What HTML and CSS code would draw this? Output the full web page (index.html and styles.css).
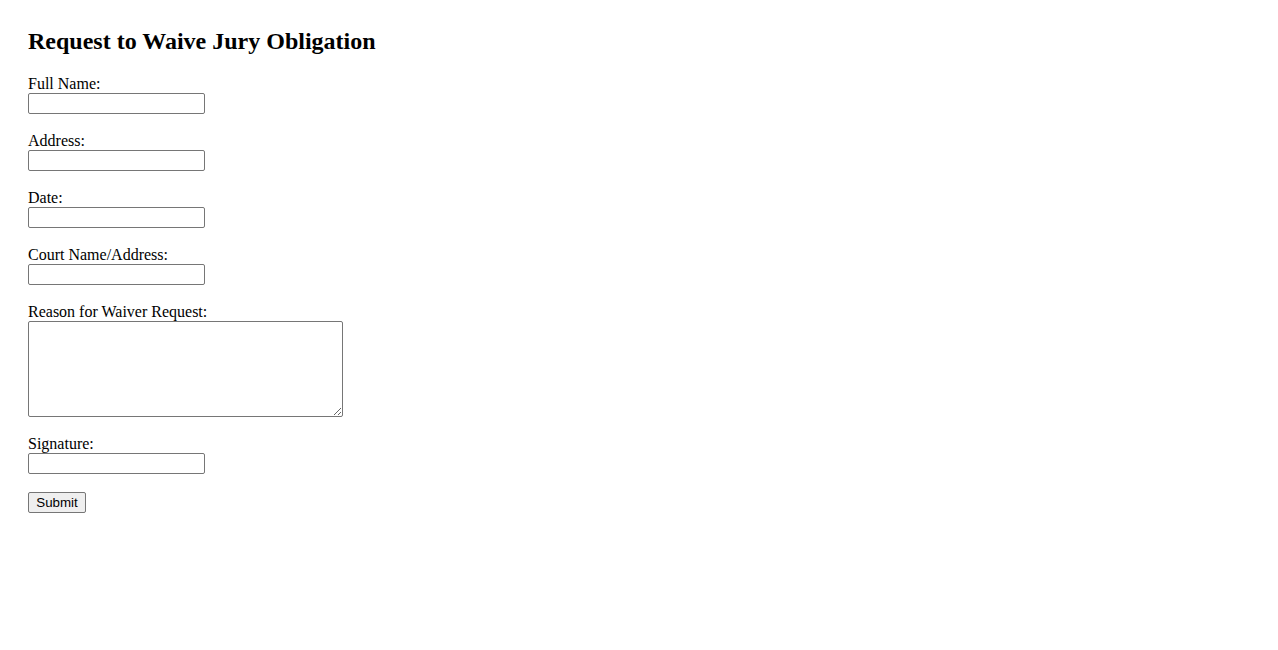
FILE: index.html
```html
<!DOCTYPE html>
<html lang="en">
<head>
<meta charset="utf-8">
<title>Request to Waive Jury Obligation</title>
<link rel="stylesheet" href="styles.css">
</head>
<body>
<div class="page">
  <h2 class="title">Request to Waive Jury Obligation</h2>
  <form class="form">
    <div class="field">
      <label class="label" for="name">Full Name:</label>
      <input class="input" type="text" id="name">
    </div>
    <div class="field">
      <label class="label" for="address">Address:</label>
      <input class="input" type="text" id="address">
    </div>
    <div class="field">
      <label class="label" for="date">Date:</label>
      <input class="input" type="text" id="date">
    </div>
    <div class="field">
      <label class="label" for="court">Court Name/Address:</label>
      <input class="input" type="text" id="court">
    </div>
    <div class="field">
      <label class="label" for="reason">Reason for Waiver Request:</label>
      <textarea class="textarea" id="reason"></textarea>
    </div>
    <div class="field">
      <label class="label" for="signature">Signature:</label>
      <input class="input" type="text" id="signature">
    </div>
    <button class="submit" type="submit">Submit</button>
  </form>
</div>
</body>
</html>
```

FILE: styles.css
```css
html, body {
  margin: 0;
  background: #fff;
}
body {
  font-family: "Liberation Serif", "Times New Roman", serif;
  font-size: 16px;
  color: #000;
}
.page {
  padding: 28px;
}
.title {
  margin: 0 0 20px;
  font-size: 24px;
  font-weight: bold;
  line-height: normal;
}
.field {
  margin-bottom: 18px;
}
.label {
  display: block;
  line-height: 18px;
}
.input {
  display: block;
  box-sizing: border-box;
  width: 177px;
  height: 21px;
  margin: 0;
  padding: 1px 2px;
  border: 1px solid #767676;
  border-radius: 2px;
  font-family: "Liberation Sans", Arial, sans-serif;
  font-size: 13.33px;
}
.textarea {
  display: block;
  box-sizing: border-box;
  width: 315px;
  height: 96px;
  margin: 0;
  padding: 2px;
  border: 1px solid #767676;
  border-radius: 2px;
  font-family: "Liberation Mono", monospace;
  font-size: 13.33px;
}
.submit {
  display: block;
  box-sizing: border-box;
  width: 58px;
  height: 21px;
  margin: 0;
  padding: 1px 6px;
  border: 1px solid #767676;
  border-radius: 2px;
  background: #efefef;
  font-family: "Liberation Sans", Arial, sans-serif;
  font-size: 13.33px;
  color: #000;
}
```
